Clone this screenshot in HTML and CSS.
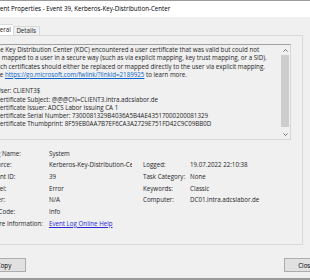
FILE: index.html
```html
<!DOCTYPE html>
<html lang="en">
<head>
  <meta charset="UTF-8" />
  <meta name="viewport" content="width=device-width, initial-scale=1.0" />
  <title>Event Properties - Event 39</title>
  <link rel="stylesheet" href="styles.css">
</head>
<body>
  <div class="window">
    <div class="titlebar">Event Properties - Event 39, Kerberos-Key-Distribution-Center</div>

    <div class="tabs">
      <div class="tab active">General</div>
      <div class="tab">Details</div>
    </div>

    <div class="panel">
      <div class="message">
        <div class="message-text">
          <div class="line">The Key Distribution Center (KDC) encountered a user certificate that was valid but could not</div>
          <div class="line">be mapped to a user in a secure way (such as via explicit mapping, key trust mapping, or a SID).</div>
          <div class="line">Such certificates should either be replaced or mapped directly to the user via explicit mapping.</div>
          <div class="line">See <a class="msg-link" href="#">https://go.microsoft.com/fwlink/?linkid=2189925</a> to learn more.</div>
          <div class="line"> </div>
          <div class="line">  User: CLIENT3$</div>
          <div class="line">  Certificate Subject: @@@CN=CLIENT3.intra.adcslabor.de</div>
          <div class="line">  Certificate Issuer: ADCS Labor Issuing CA 1</div>
          <div class="line">  Certificate Serial Number: 7300081329B4036A5B4AE43517000200081329</div>
          <div class="line">  Certificate Thumbprint: 8F59EB0AA7B7EF6CA3A2729E751FD42C9C09BB0D</div>
        </div>
        <div class="scrollbar">
          <div class="arrow">
            <svg width="5" height="3" viewBox="0 0 5 3"><polyline points="0.5,2.5 2.5,0.5 4.5,2.5" fill="none" stroke="#606060" stroke-width="0.9"/></svg>
          </div>
          <div class="thumb"></div>
          <div class="arrow">
            <svg width="5" height="3" viewBox="0 0 5 3"><polyline points="0.5,0.5 2.5,2.5 4.5,0.5" fill="none" stroke="#606060" stroke-width="0.9"/></svg>
          </div>
        </div>
      </div>

      <div class="fields">
        <span class="label first">Log Name:</span><span class="value">System</span>
        <span class="label first">Source:</span><span class="value source">Kerberos-Key-Distribution-Center</span>
        <span class="label">Logged:</span><span class="value">19.07.2022 22:10:38</span>
        <span class="label first">Event ID:</span><span class="value">39</span>
        <span class="label">Task Category:</span><span class="value">None</span>
        <span class="label first">Level:</span><span class="value">Error</span>
        <span class="label">Keywords:</span><span class="value">Classic</span>
        <span class="label first">User:</span><span class="value">N/A</span>
        <span class="label">Computer:</span><span class="value">DC01.intra.adcslabor.de</span>
        <span class="label first">OpCode:</span><span class="value">Info</span>
        <span class="label first">More Information:</span><span class="value"><a class="help-link" href="#">Event Log Online Help</a></span>
      </div>
    </div>

    <div class="buttons">
      <button class="btn">Copy</button>
      <button class="btn close">Close</button>
    </div>
  </div>
</body>
</html>
```

FILE: styles.css
```css
body {
  margin: 0;
  height: 280px;
  overflow: hidden;
  background: #f0f0f0;
  font-family: 'Open Sans', sans-serif;
  font-size: 6.2px;
  color: #1e1e1e;
}
.window {
  box-sizing: border-box;
  width: 358px;
  height: 280px;
  margin-left: -24px;
  border-top: 1px solid #9a9a9a;
  border-bottom: 2px solid #9a9a9a;
}
.titlebar {
  height: 16px;
  line-height: 16px;
  padding-left: 17.5px;
  background: #fff;
  color: #000;
  white-space: nowrap;
}
.tabs {
  display: flex;
  align-items: flex-end;
  height: 11px;
  margin: 7px 0 0 8px;
}
.tab {
  box-sizing: border-box;
  height: 9px;
  line-height: 8px;
  padding: 0 2.6px;
  border: 1px solid #d9d9d9;
  border-bottom: none;
  background: #f0f0f0;
}
.tab.active {
  height: 11px;
  line-height: 10px;
  padding: 0 2px 0 3px;
  border-right: none;
  background: #fff;
}
.panel {
  box-sizing: border-box;
  width: 321px;
  height: 210px;
  margin-left: 6px;
  padding: 8px 11px 0 7px;
  border: 1px solid #d9d9d9;
}
.message {
  box-sizing: border-box;
  display: flex;
  height: 96px;
  border: 1px solid #a0a0a0;
  border-color: #a0a0a0 #d6d6d6 #d6d6d6 #a0a0a0;
}
.message-text {
  flex: 1;
  padding: 1px 0 0 2px;
  overflow: hidden;
}
.line {
  height: 8.25px;
  line-height: 8.25px;
  white-space: pre;
}
.msg-link {
  color: #0a64c8;
  text-decoration: underline;
}
.scrollbar {
  display: flex;
  flex-direction: column;
  width: 10px;
}
.arrow {
  display: flex;
  align-items: center;
  justify-content: center;
  height: 10px;
}
.arrow svg {
  display: block;
}
.thumb {
  flex: 1;
  margin: 0 1px 2px;
  background: #cdcdcd;
}
.fields {
  display: grid;
  grid-template-columns: 59px 94px 47px 1fr;
  grid-auto-rows: 11.7px;
  align-items: center;
  margin-top: 7.2px;
}
.label.first {
  grid-column: 1;
}
.label, .value {
  white-space: nowrap;
}
.value {
  overflow: hidden;
  margin-right: 4px;
}
.value.source {
  margin-right: 11px;
}
.help-link {
  color: #2828d8;
  text-decoration: underline;
}
.buttons {
  display: flex;
  justify-content: space-between;
  margin-top: 13px;
  padding: 0 6px;
}
.btn {
  box-sizing: border-box;
  width: 44px;
  height: 14px;
  padding: 0;
  font-family: inherit;
  font-size: 6.2px;
  color: #000;
  background: #e1e1e1;
  border: 1px solid #adadad;
}
```
